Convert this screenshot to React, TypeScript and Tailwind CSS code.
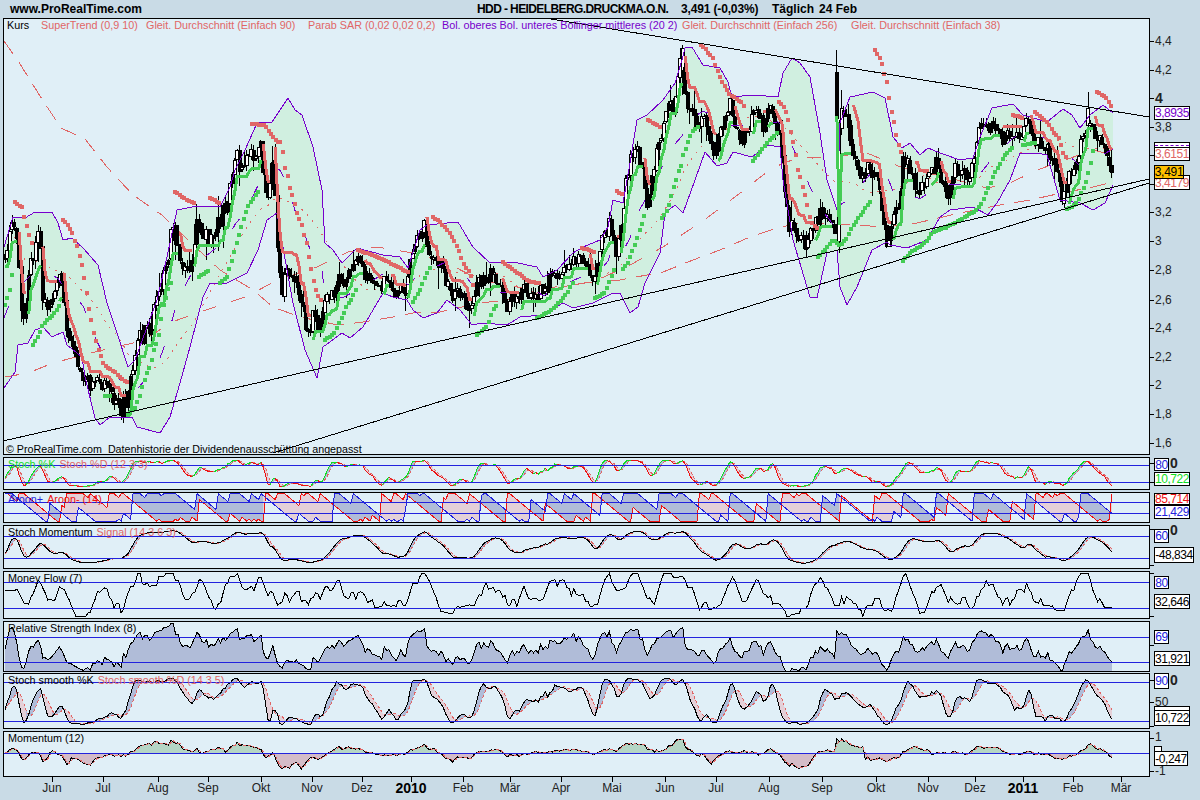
import React from "react";

type P = number[][];
const PRICE: P = [[5,253],[13,220],[17,243],[22,310],[23,323],[30,270],[33,257],[37,230],[42,267],[43,297],[50,310],[57,277],[63,287],[67,327],[73,340],[80,367],[87,383],[93,383],[107,383],[115,400],[120,410],[127,397],[133,367],[140,337],[150,330],[160,287],[167,267],[172,227],[177,243],[183,267],[190,267],[197,227],[203,230],[210,243],[217,230],[222,213],[228,197],[235,153],[242,170],[248,153],[257,157],[260,140],[267,207],[273,153],[278,250],[282,293],[287,265],[297,280],[302,303],[308,337],[313,313],[317,330],[323,310],[330,297],[340,280],[350,273],[357,253],[362,273],[370,277],[383,283],[395,293],[405,293],[412,257],[418,237],[425,227],[427,250],[437,260],[443,263],[447,287],[455,297],[462,293],[470,320],[477,287],[482,280],[492,273],[500,280],[507,307],[513,300],[522,290],[533,293],[543,293],[550,280],[558,283],[567,263],[573,260],[585,260],[593,287],[600,247],[610,220],[617,253],[627,173],[635,147],[642,163],[648,207],[655,160],[662,137],[668,107],[673,110],[682,53],[685,97],[693,113],[698,120],[708,127],[715,153],[725,113],[730,103],[740,143],[745,130],[757,107],[763,127],[772,107],[780,133],[785,200],[790,227],[797,230],[805,247],[810,237],[823,210],[833,230],[837,240],[840,90],[842,107],[847,120],[852,153],[860,180],[868,167],[877,183],[885,223],[888,253],[893,210],[900,207],[903,163],[908,157],[915,190],[923,187],[930,180],[937,160],[942,180],[948,207],[955,163],[963,177],[970,177],[975,153],[980,127],[988,130],[993,120],[1002,140],[1012,130],[1018,140],[1025,120],[1033,140],[1042,143],[1048,153],[1057,173],[1062,200],[1068,183],[1077,157],[1083,140],[1090,117],[1095,133],[1100,137],[1107,157],[1113,172]];
const UPPER: P = [[4,247],[10,227],[13,217],[25,218],[35,212],[52,212],[58,223],[63,240],[72,238],[83,248],[98,265],[107,303],[117,333],[128,367],[135,360],[157,300],[167,257],[177,210],[197,206],[220,207],[230,187],[235,170],[245,150],[257,123],[272,122],[280,110],[288,98],[295,110],[302,115],[313,147],[322,190],[325,243],[333,250],[342,263],[357,248],[383,255],[400,257],[408,268],[420,230],[427,225],[447,223],[458,222],[473,247],[490,263],[513,262],[537,267],[543,277],[557,270],[573,253],[583,247],[600,240],[608,227],[613,200],[623,203],[630,163],[637,120],[647,115],[663,100],[675,83],[682,60],[685,48],[692,47],[698,57],[703,65],[720,68],[728,82],[732,97],[753,95],[778,97],[783,73],[792,58],[800,63],[810,77],[820,133],[827,180],[837,210],[840,123],[850,97],[873,92],[885,98],[893,137],[902,148],[910,143],[920,155],[928,148],[940,153],[960,160],[973,158],[980,137],[992,108],[1013,104],[1023,115],[1047,122],[1063,109],[1072,115],[1080,128],[1090,115],[1103,105],[1113,113]];
const LOWER: P = [[4,388],[15,372],[18,345],[28,343],[35,330],[43,327],[52,337],[63,332],[67,345],[82,357],[85,377],[95,418],[100,425],[110,417],[117,418],[132,417],[137,427],[160,433],[170,417],[180,383],[190,347],[203,297],[210,283],[227,283],[247,273],[258,250],[267,220],[277,213],[287,270],[293,303],[305,350],[317,378],[323,347],[342,333],[350,338],[363,327],[383,293],[393,297],[407,300],[413,310],[423,318],[437,313],[447,300],[460,310],[472,325],[483,323],[507,325],[520,317],[543,315],[563,303],[573,308],[593,303],[613,293],[620,293],[630,313],[638,307],[645,283],[660,253],[665,213],[675,205],[683,213],[695,180],[705,152],[717,166],[727,163],[733,152],[752,157],[767,145],[780,147],[783,180],[793,240],[810,297],[817,298],[827,253],[837,250],[840,287],[847,305],[857,287],[872,250],[887,242],[890,245],[907,248],[927,240],[940,217],[950,210],[973,207],[988,215],[997,203],[1010,180],[1020,153],[1037,153],[1047,155],[1060,200],[1080,203],[1093,210],[1105,203],[1113,185]];
const MA256: P = [[4,41],[20,64],[40,96],[61,128],[85,139],[107,167],[133,195],[162,215],[190,242],[220,270],[253,290],[273,307],[300,317],[338,325],[363,322],[393,317],[413,313],[440,312],[480,303],[507,300],[580,283],[620,280],[663,272],[693,260],[720,250],[750,237],[777,228],[800,223],[853,225],[887,227],[917,223],[960,213],[1000,205],[1030,200],[1057,194],[1093,187],[1113,182]];
const MA90: P = [[5,377],[28,373],[53,363],[103,350],[133,343],[155,333],[172,322],[197,313],[245,297],[278,280],[317,267],[348,252],[377,247],[413,253],[447,263],[480,280],[533,290],[593,282],[630,265],[663,247],[700,223],[735,197],[772,168],[797,158],[830,157],[867,153],[903,168],[950,178],[987,188],[1010,183],[1037,170],[1057,163],[1093,150],[1113,155]];

// Parabolic SAR dots, by run
const SAR_RED: P[] = [
  [[15,202],[23,208],[25,220],[28,229],[30,239],[33,247]],
  [[63,220],[66,222],[72,232],[75,241],[78,248],[80,258],[83,269],[85,283],[87,295],[89,309],[92,323],[94,334],[97,344],[99,352],[102,358],[104,365],[110,369],[115,372],[120,377],[125,381],[128,383]],
  [[175,192],[180,195],[187,200],[195,204]],
  [[210,198],[220,203]],
  [[252,124],[265,125],[268,130],[273,137],[277,142],[282,142],[283,154],[285,167],[288,177],[290,188],[293,197],[295,205],[297,213],[300,220],[303,228],[304,235],[307,245],[309,258],[312,272],[314,283],[316,290],[319,297],[323,305]],
  [[358,250],[380,258],[408,272]],
  [[433,217],[440,222],[450,233],[455,242],[460,253],[462,260],[465,267],[470,273],[472,280],[474,287]],
  [[503,262],[530,282],[540,283]],
  [[582,248],[595,252]],
  [[617,191],[623,195]],
  [[648,120],[662,128]],
  [[701,45],[705,48],[709,54],[713,58],[715,64],[717,70],[719,75],[721,80],[724,85],[727,90],[728,93],[735,98],[742,103],[745,108]],
  [[779,102],[783,106],[786,112],[789,122],[791,133],[794,145],[796,157],[798,170],[801,179],[803,188],[806,198],[808,208],[810,218],[813,225],[817,228]],
  [[875,50],[878,55],[882,63],[884,73],[887,82],[889,96],[891,110],[894,122],[896,133],[898,143],[901,152]],
  [[1013,115],[1023,118]],
  [[1035,112],[1042,118],[1048,123],[1053,132],[1059,138],[1061,145],[1063,152],[1066,157]],
  [[1097,92],[1102,95],[1106,97],[1109,102],[1112,108],[1113,113]],
];
const SAR_GREEN: P[] = [
  [[5,305],[9,294],[11,282],[13,269]],
  [[33,345],[37,338],[41,330],[43,325],[47,320],[52,316],[55,312],[60,305]],
  [[105,396],[110,396]],
  [[128,415],[135,408],[137,403],[140,396],[142,388],[145,379],[147,373],[151,365],[153,352],[157,343],[159,334],[161,320],[163,307],[166,298],[168,290],[172,280]],
  [[199,277],[210,270]],
  [[220,283],[227,277],[230,267],[233,257],[235,248],[238,238],[242,225],[245,215],[249,205],[257,193],[260,190]],
  [[325,340],[335,333],[339,323],[343,315],[347,305],[351,300],[357,287]],
  [[413,302],[420,290],[426,275],[430,267]],
  [[477,335],[487,327],[493,310],[498,303]],
  [[537,318],[547,313],[557,305],[567,293],[573,282]],
  [[595,298],[605,293],[612,275],[615,268]],
  [[623,269],[628,263],[631,255],[634,247],[637,239],[639,232],[642,224],[643,218],[646,213]],
  [[662,218],[667,211],[670,202],[672,194],[674,186],[677,178],[678,172],[681,166],[683,156],[686,148],[689,139],[692,132],[698,127]],
  [[753,161],[758,155],[763,148],[770,140],[777,133]],
  [[818,257],[827,248],[833,240],[840,246],[847,238],[852,227],[857,220],[862,213],[867,206],[872,200]],
  [[903,261],[910,253],[922,245],[928,240],[932,233],[947,227],[960,220],[975,211],[980,206],[983,201],[986,193],[989,186],[992,180],[994,174],[998,168],[1001,162],[1005,155],[1008,152],[1012,148]],
  [[1023,145],[1035,143]],
  [[1067,209],[1073,206],[1078,202],[1080,196],[1085,185],[1087,178],[1090,167],[1092,156],[1094,147]],
];

const at = (t: P, x: number) => {
  if (x <= t[0][0]) return t[0][1];
  for (let i = 1; i < t.length; i++) {
    if (x <= t[i][0]) {
      const a = t[i - 1], b = t[i];
      return a[1] + ((b[1] - a[1]) * (x - a[0])) / (b[0] - a[0] || 1);
    }
  }
  return t[t.length - 1][1];
};
let seed = 20110224;
const rnd = () => {
  seed = (seed + 0x6d2b79f5) | 0;
  let t = Math.imul(seed ^ (seed >>> 15), 1 | seed);
  t = (t + Math.imul(t ^ (t >>> 7), 61 | t)) ^ t;
  return ((t ^ (t >>> 14)) >>> 0) / 4294967296;
};
const N = 468, DX = 2.37;
const X = (i: number) => 5 + i * DX;
const pr = (y: number) => 4 - (y - 98) / 143.5;
const Y = (p: number) => 98 + (4 - p) * 143.5;

type Bar = { x: number; o: number; c: number; h: number; l: number; v: number; fill: boolean };
const bars: Bar[] = [];
{
  let prev = at(PRICE, 5);
  for (let i = 0; i < N; i++) {
    const x = X(i);
    const c = at(PRICE, x) + (rnd() - 0.5) * 16;
    const o = prev + (rnd() - 0.5) * 4;
    let top = Math.min(o, c) - rnd() * 7;
    let bot = Math.max(o, c) + rnd() * 7;
    if (rnd() < 0.18) top -= rnd() * 16;
    if (rnd() < 0.18) bot += rnd() * 16;
    bars.push({ x, o, c, h: top, l: bot, v: 0.5 + rnd() * 1.5, fill: c > o || rnd() < 0.3 });
    prev = c;
  }
  const spike = (sx: number, h: number, o: number, c: number, l: number) => {
    const i = Math.round((sx - 5) / DX);
    bars[i] = { ...bars[i], h, o, c, l, fill: c > o };
  };
  spike(838, 50, 72, 118, 125);
  spike(682, 45, 70, 48, 95);
  spike(1088, 92, 125, 108, 130);
  spike(1112, 150, 165, 172, 178);
}
const close = bars.map((b) => pr(b.c));
const high = bars.map((b) => pr(b.h));
const low = bars.map((b) => pr(b.l));

const sma = (a: number[], p: number) =>
  a.map((_, i) => {
    const s = Math.max(0, i - p + 1);
    let t = 0;
    for (let j = s; j <= i; j++) t += a[j];
    return t / (i - s + 1);
  });
const ema = (a: number[], p: number) => {
  const k = 2 / (p + 1);
  let v = a[0];
  return a.map((x) => (v = v + k * (x - v)));
};
const hh = (i: number, p: number) => Math.max(...high.slice(Math.max(0, i - p + 1), i + 1));
const ll = (i: number, p: number) => Math.min(...low.slice(Math.max(0, i - p + 1), i + 1));
const fastK = (p: number) =>
  close.map((c, i) => {
    const a = hh(i, p), b = ll(i, p);
    return a > b ? ((c - b) / (a - b)) * 100 : 50;
  });

// SuperTrend
const st: { v: number; up: boolean }[] = [];
{
  const tr = bars.map((_, i) =>
    i ? Math.max(high[i] - low[i], Math.abs(high[i] - close[i - 1]), Math.abs(low[i] - close[i - 1])) : high[i] - low[i]
  );
  const atr = sma(tr, 10);
  let fu = 0, fl = 0, up = true;
  for (let i = 0; i < N; i++) {
    const m = (high[i] + low[i]) / 2;
    const bu = m + 0.9 * atr[i], bl = m - 0.9 * atr[i];
    if (i === 0) { fu = bu; fl = bl; }
    else {
      fu = bu < fu || close[i - 1] > fu ? bu : fu;
      fl = bl > fl || close[i - 1] < fl ? bl : fl;
      if (up && close[i] < fl) up = false;
      else if (!up && close[i] > fu) up = true;
    }
    st.push({ v: up ? fl : fu, up });
  }
}
const dots = (runs: P[]) => {
  const out: number[][] = [];
  runs.forEach((r) => {
    for (let x = r[0][0]; x <= r[r.length - 1][0] + 0.1; x += DX) out.push([x, at(r, x)]);
  });
  return out;
};
const redDots = dots(SAR_RED), greenDots = dots(SAR_GREEN);
const ma38 = sma(close, 38);

const scale = (a: number[], zero: number, k: number) => a.map((v) => zero - v * k);
const line = (a: number[]) => a.map((y, i) => `${i ? "L" : "M"}${X(i).toFixed(1)} ${y.toFixed(1)}`).join("");
const band = (a: number[], b: number[]) => {
  let pos = "", neg = "";
  for (let i = 1; i < a.length; i++) {
    const q = `M${X(i - 1).toFixed(1)} ${a[i - 1].toFixed(1)}L${X(i).toFixed(1)} ${a[i].toFixed(1)}L${X(i).toFixed(1)} ${b[i].toFixed(1)}L${X(i - 1).toFixed(1)} ${b[i - 1].toFixed(1)}Z`;
    if (a[i] < b[i]) pos += q; else neg += q;
  }
  return [pos, neg];
};
const poly = (t: P) => t.map((p) => p.join(",")).join(" ");

// Indicators
const sK = sma(fastK(12), 3);
const sD = sma(sK, 3);
const kY = scale(sK, 487.7, 0.283), dY = scale(sD, 487.7, 0.283);

const aUp = bars.map((_, i) => {
  let b = i;
  for (let j = Math.max(0, i - 14); j <= i; j++) if (high[j] >= high[b]) b = j;
  return (100 * (14 - (i - b))) / 14;
});
const aDn = bars.map((_, i) => {
  let b = i;
  for (let j = Math.max(0, i - 14); j <= i; j++) if (low[j] <= low[b]) b = j;
  return (100 * (14 - (i - b))) / 14;
});
const aUY = scale(aUp, 521.2, 0.275), aDY = scale(aDn, 521.2, 0.275);

const smd = ema(ema(close.map((c, i) => c - (hh(i, 14) + ll(i, 14)) / 2), 3), 6);
const smr = ema(ema(close.map((_, i) => hh(i, 14) - ll(i, 14)), 3), 6);
const smi = smd.map((d, i) => (200 * d) / (smr[i] || 1));
const smY = scale(smi, 547, 0.183), smS = scale(sma(smi, 3), 547, 0.183);

const tp = bars.map((_, i) => (high[i] + low[i] + close[i]) / 3);
const mfi = tp.map((_, i) => {
  if (i < 5) return 60;
  let a = 0.001, b = 0.001;
  for (let j = Math.max(1, i - 6); j <= i; j++) {
    const f = tp[j] * bars[j].v;
    if (tp[j] > tp[j - 1]) a += f; else b += f;
  }
  return (100 * a) / (a + b);
});
const mfY = scale(mfi, 616.7, 0.433);

const rsi: number[] = [];
{
  let g = 0.01, l = 0.01;
  close.forEach((c, i) => {
    const d = i ? c - close[i - 1] : 0;
    g = (g * 7 + Math.max(d, 0)) / 8;
    l = (l * 7 + Math.max(-d, 0)) / 8;
    rsi.push(100 - 100 / (1 + g / l));
  });
}
const rsY = scale(rsi, 680.8, 0.625);
const ssK = sma(fastK(14), 3), ssD = sma(ssK, 5);
const ssKY = scale(ssK, 726, 0.4875), ssDY = scale(ssD, 726, 0.4875);
const mom = close.map((c, i) => c - close[Math.max(0, i - 12)]);
const moY = scale(mom, 753, 16.5), moS = scale(sma(mom, 2), 753, 16.5);
const zero = bars.map(() => 753);

const RED = "#e06666", GREEN = "#44cc55", PURPLE = "#7700cc", BLUE = "#2222dd";

function Main() {
  const stSegs: { d: string; up: boolean }[] = [];
  st.forEach((p, i) => {
    const cmd = `${X(i).toFixed(1)} ${Y(p.v).toFixed(1)}`;
    if (i && st[i - 1].up === p.up) stSegs[stSegs.length - 1].d += "L" + cmd;
    else stSegs.push({ d: "M" + cmd, up: p.up });
  });
  const mid = UPPER.map((p) => [p[0], (p[1] + at(LOWER, p[0])) / 2]);
  return (
    <svg viewBox="4 19 1145 435" className="block h-full w-full" shapeRendering="crispEdges">
      <polygon points={poly([...UPPER, ...[...LOWER].reverse()])} fill="#d0efe0" />
      <polyline points={poly(MA256)} fill="none" stroke={RED} strokeDasharray="16 10" />
      <polyline points={poly(MA90)} fill="none" stroke={RED} strokeDasharray="14 16" />
      <path d={line(ma38.map(Y))} fill="none" stroke={RED} strokeDasharray="2 6" />
      {bars.map((b, i) => {
        const top = Math.min(b.o, b.c), h = Math.max(1, Math.abs(b.o - b.c));
        return (
          <g key={i}>
            <line x1={b.x} x2={b.x} y1={b.h} y2={b.l} stroke="#000" />
            <rect x={b.x - 1.5} y={top} width={3} height={h} fill={b.fill ? "#000" : "#fff"} stroke="#000" />
          </g>
        );
      })}
      <polyline points={poly(UPPER)} fill="none" stroke={PURPLE} />
      <polyline points={poly(LOWER)} fill="none" stroke={PURPLE} />
      <polyline points={poly(mid)} fill="none" stroke={PURPLE} strokeDasharray="12 26" />
      {stSegs.map((s, i) => (
        <path key={i} d={s.d} fill="none" strokeWidth={3} stroke={s.up ? GREEN : RED} />
      ))}
      {redDots.map((d, i) => (
        <rect key={i} x={d[0] - 2} y={d[1] - 2} width={4} height={4} fill={RED} />
      ))}
      {greenDots.map((d, i) => (
        <rect key={i} x={d[0] - 2} y={d[1] - 2} width={4} height={4} fill={GREEN} />
      ))}
      <line x1={545} y1={18} x2={1149} y2={117} stroke="#000" />
      <line x1={3} y1={441} x2={1149} y2={179} stroke="#000" />
      <line x1={273} y1={453} x2={1149} y2={183} stroke="#000" />
    </svg>
  );
}

function Sub({ top, h, children, levels }: { top: number; h: number; children: React.ReactNode; levels: number[] }) {
  return (
    <svg viewBox={`4 ${top + 1} 1145 ${h}`} className="block h-full w-full" shapeRendering="crispEdges">
      {children}
      {levels.map((y) => (
        <line key={y} x1={4} x2={1149} y1={y} y2={y} stroke={BLUE} />
      ))}
    </svg>
  );
}

const FB = "#b0bcd8", FP = "#e4d0d8";
const Fill = ({ a, b }: { a: number[]; b: number[] }) => {
  const [p, n] = band(a, b);
  return (
    <>
      <path d={p} fill={FB} />
      <path d={n} fill={FP} />
    </>
  );
};

function StochK() {
  const segs: { d: string; up: boolean }[] = [];
  kY.forEach((y, i) => {
    if (!i) return;
    const up = y < dY[i];
    const p = `${X(i).toFixed(1)} ${y.toFixed(1)}`;
    if (segs.length && segs[segs.length - 1].up === up) segs[segs.length - 1].d += "L" + p;
    else segs.push({ d: `M${X(i - 1).toFixed(1)} ${kY[i - 1].toFixed(1)}L${p}`, up });
  });
  return (
    <>
      {segs.map((s, i) => (
        <path key={i} d={s.d} fill="none" stroke={s.up ? "#11dd22" : "#ee1111"} />
      ))}
    </>
  );
}

const L = ({ c, children }: { c: string; children: React.ReactNode }) => <span className={c}>{children}</span>;

function Legend({ children }: { children: React.ReactNode }) {
  return <div className="absolute left-[4px] top-0 flex gap-[4px] whitespace-nowrap text-[10.8px] leading-[13px]">{children}</div>;
}

const AXIS: [number, string, boolean?][] = [
  [41, "4,4"], [70, "4,2"], [98, "4", true], [127, "3,8"], [212, "3,2"], [241, "3"], [270, "2,8"], [300, "2,6"], [328, "2,4"], [357, "2,2"], [385, "2"], [414, "1,8"], [443, "1,6"],
];
const MINOR = [155, 184, 463, 482, 529, 565, 573, 616, 645, 680, 702, 726, 738, 771];

type Tag = [number, number, number, number, string, string];
const TAGS: Tag[] = [
  [106, 1154, 36, 14, "3,8935", "text-[#7700cc]"],
  [147, 1154, 36, 14, "3,6151", "text-[#e06666]"],
  [175, 1154, 36, 15, "3,4179", "text-[#e06666]"],
  [458, 1154, 15, 13, "80", "text-[#2222dd]"],
  [472, 1154, 36, 14, "10,722", "text-[#11dd22]"],
  [493, 1154, 36, 12, "85,714", "text-[#ee1111]"],
  [505, 1154, 36, 14, "21,429", "text-[#2222dd]"],
  [529, 1154, 15, 14, "60", "text-[#2222dd]"],
  [547, 1154, 40, 16, "-48,834", "text-black"],
  [576, 1154, 15, 13, "80", "text-[#2222dd]"],
  [594, 1154, 36, 15, "32,646", "text-black"],
  [630, 1154, 15, 14, "69", "text-[#2222dd]"],
  [651, 1154, 36, 15, "31,921", "text-black"],
  [673, 1154, 15, 16, "90", "text-[#2222dd]"],
  [706, 1154, 36, 6, "", "text-black"],
  [710, 1154, 36, 16, "10,722", "text-black"],
  [746, 1154, 8, 6, "", "text-black"],
  [751, 1154, 34, 15, "-0,247", "text-black"],
];
const SIDE: [number, number, string, string][] = [
  [463, 1170, "0", "font-bold text-[14px]"],
  [530, 1170, "0", "font-bold text-[14px]"],
  [680, 1170, "0", "font-bold text-[14px]"],
  [702, 1155, "50", ""],
  [737, 1155, "1", ""],
  [771, 1155, "-1", ""],
];

function Axis() {
  return (
    <div className="relative h-full w-[50px] flex-none text-[12px] leading-[14px] text-[#222]">
      {AXIS.map(([y, t, b]) => (
        <React.Fragment key={t + y}>
          <div className="absolute left-0 h-px w-[4px] bg-black" style={{ top: y - 18 }} />
          <div className={`absolute left-[5px] ${b ? "font-bold text-[14px]" : ""}`} style={{ top: y - 25 }}>{t}</div>
        </React.Fragment>
      ))}
      {MINOR.map((y) => (
        <div key={y} className="absolute left-0 h-px w-[4px] bg-black" style={{ top: y - 18 }} />
      ))}
      {SIDE.map(([y, x, t, c]) => (
        <div key={y} className={`absolute ${c}`} style={{ top: y - 25, left: x - 1150 }}>{t}</div>
      ))}
      <div className="absolute left-[4px] top-[124px] h-[8px] w-[36px] border border-b-0 border-black bg-white">
        <div className="mt-[2px] h-0 w-full border-t border-dashed border-[#7700cc]" />
      </div>
      {TAGS.map(([y, x, w, h, t, c], i) => (
        <div
          key={i}
          className={`absolute flex items-center justify-center overflow-hidden whitespace-nowrap border border-black bg-white text-[12px] leading-none tracking-[-0.45px] ${c}`}
          style={{ top: y - 18, left: x - 1150, width: w, height: h }}
        >
          {t}
        </div>
      ))}
      <div className="absolute flex items-center justify-center border border-black bg-[#ffc000] text-[12px] leading-none tracking-[-0.3px] text-black" style={{ top: 165 - 18, left: 4, width: 30, height: 14 }}>
        3,491
      </div>
    </div>
  );
}

const MONTHS: [number, string, boolean?][] = [
  [52, "Jun"], [103, "Jul"], [158, "Aug"], [208, "Sep"], [261, "Okt"], [312, "Nov"], [362, "Dez"], [411, "2010", true], [463, "Feb"], [510, "Mär"], [561, "Apr"], [612, "Mai"], [665, "Jun"], [716, "Jul"], [769, "Aug"], [822, "Sep"], [876, "Okt"], [928, "Nov"], [975, "Dez"], [1023, "2011", true], [1073, "Feb"], [1121, "Mär"],
];

const PANEL = "relative mt-[2px] overflow-hidden border border-black bg-[#e0eff7]";

export default function App() {
  return (
    <div className="flex h-[800px] w-[1200px] flex-col overflow-hidden bg-[#c9dbe6] font-['Liberation_Sans',Arial,sans-serif] text-black">
      <header className="flex h-[18px] flex-none items-center whitespace-pre text-[12px] font-bold leading-none">
        <span className="ml-[10px] w-[467px]">www.ProRealTime.com</span>
        <span className="w-[204px] tracking-[-0.6px]">HDD - HEIDELBERG.DRUCKMA.O.N.</span>
        <span className="w-[91px] tracking-[-0.15px]">3,491 (-0,03%)</span>
        <span className="w-[47px]">Täglich</span>
        <span>24 Feb</span>
      </header>
      <div className="flex min-h-0 flex-1">
        <div className="ml-[3px] flex w-[1147px] flex-none flex-col">
          <div className="relative h-[437px] overflow-hidden border border-black bg-[#e0eff7]">
            <Main />
            <div className="absolute left-0 top-0 h-[14px] w-full whitespace-nowrap text-[10.8px] leading-[13px]">
              <span className="absolute left-[3px]">Kurs</span>
              <span className="absolute left-[37px] text-[#e06666]">SuperTrend (0,9 10)</span>
              <span className="absolute left-[142px] text-[#e06666]">Gleit. Durchschnitt (Einfach 90)</span>
              <span className="absolute left-[304px] text-[#e06666]">Parab SAR (0,02 0,02 0,2)</span>
              <span className="absolute left-[438px] text-[#7700cc]">Bol. oberes Bol. unteres Bollinger mittleres (20 2)</span>
              <span className="absolute left-[678px] text-[#e06666]">Gleit. Durchschnitt (Einfach 256)</span>
              <span className="absolute left-[847px] text-[#e06666]">Gleit. Durchschnitt (Einfach 38)</span>
            </div>
            <div className="absolute bottom-[-2px] left-[2px] whitespace-pre text-[10.7px] leading-[14px]">© ProRealTime.com  Datenhistorie der Dividendenausschüttung angepasst</div>
          </div>
          <div className={`${PANEL} h-[33px]`}>
            <Sub top={457} h={31} levels={[465, 482]}>
              <Fill a={kY} b={dY} />
              <path d={line(dY)} fill="none" stroke={RED} strokeDasharray="3 2" />
              <StochK />
            </Sub>
            <Legend><L c="text-[#11dd22]">Stoch %K</L><L c="text-[#e06666]">Stoch %D (12 3 3)</L></Legend>
          </div>
          <div className={`${PANEL} h-[31px]`}>
            <Sub top={492} h={29} levels={[502, 513]}>
              <Fill a={aUY} b={aDY} />
              <path d={line(aDY)} fill="none" stroke="#ee1111" />
              <path d={line(aUY)} fill="none" stroke="#2222dd" />
            </Sub>
            <Legend><L c="text-[#2222dd]">Aroon+</L><L c="text-[#ee1111]">Aroon- (14)</L></Legend>
          </div>
          <div className={`${PANEL} h-[44px]`}>
            <Sub top={525} h={42} levels={[536, 558]}>
              <Fill a={smY} b={smS} />
              <path d={line(smS)} fill="none" stroke={RED} strokeDasharray="3 2" />
              <path d={line(smY)} fill="none" stroke="#000" />
            </Sub>
            <Legend><L c="text-black">Stoch Momentum</L><L c="text-[#e06666]">Signal (14 3 6 3)</L></Legend>
          </div>
          <div className={`${PANEL} h-[48px]`}>
            <Sub top={571} h={46} levels={[582, 608]}>
              <path d={line(mfY)} fill="none" stroke="#000" />
            </Sub>
            <Legend><L c="text-black">Money Flow (7)</L></Legend>
          </div>
          <div className={`${PANEL} h-[51px]`}>
            <Sub top={621} h={49} levels={[637, 662]}>
              <path d={`${line(rsY)}L${X(N - 1)} 672L5 672Z`} fill={FB} />
              <path d={line(rsY)} fill="none" stroke="#000" />
            </Sub>
            <Legend><L c="text-black">Relative Strength Index (8)</L></Legend>
          </div>
          <div className={`${PANEL} !mt-[1px] h-[56px]`}>
            <Sub top={673} h={54} levels={[682, 721]}>
              <Fill a={ssKY} b={ssDY} />
              <path d={line(ssDY)} fill="none" stroke={RED} strokeDasharray="3 2" />
              <path d={line(ssKY)} fill="none" stroke="#000" />
            </Sub>
            <Legend><L c="text-black">Stoch smooth %K</L><L c="text-[#e06666]">Stoch smooth %D (14 3 5)</L></Legend>
          </div>
          <div className={`${PANEL} h-[46px]`}>
            <Sub top={731} h={44} levels={[753]}>
              {(() => {
                const [p, n] = band(moY, zero);
                return (
                  <>
                    <path d={p} fill="#b5d5c5" />
                    <path d={n} fill="#d4bcc8" />
                  </>
                );
              })()}
              <path d={line(moY)} fill="none" stroke="#000" />
              <path d={line(moS)} fill="none" stroke={RED} strokeDasharray="3 2" />
            </Sub>
            <Legend><L c="text-black">Momentum (12)</L></Legend>
          </div>
          <div className="relative flex-1 text-[12px] leading-[14px] text-[#222]">
            {MONTHS.map(([x, t, b]) => (
              <React.Fragment key={t + x}>
                <div className="absolute top-0 h-[5px] w-px bg-black" style={{ left: x - 3 }} />
                <div className={`absolute top-[4px] w-[40px] text-center ${b ? "text-[14px] font-bold text-black" : ""}`} style={{ left: x - 23 }}>
                  {t}
                </div>
              </React.Fragment>
            ))}
          </div>
        </div>
        <Axis />
      </div>
    </div>
  );
}
